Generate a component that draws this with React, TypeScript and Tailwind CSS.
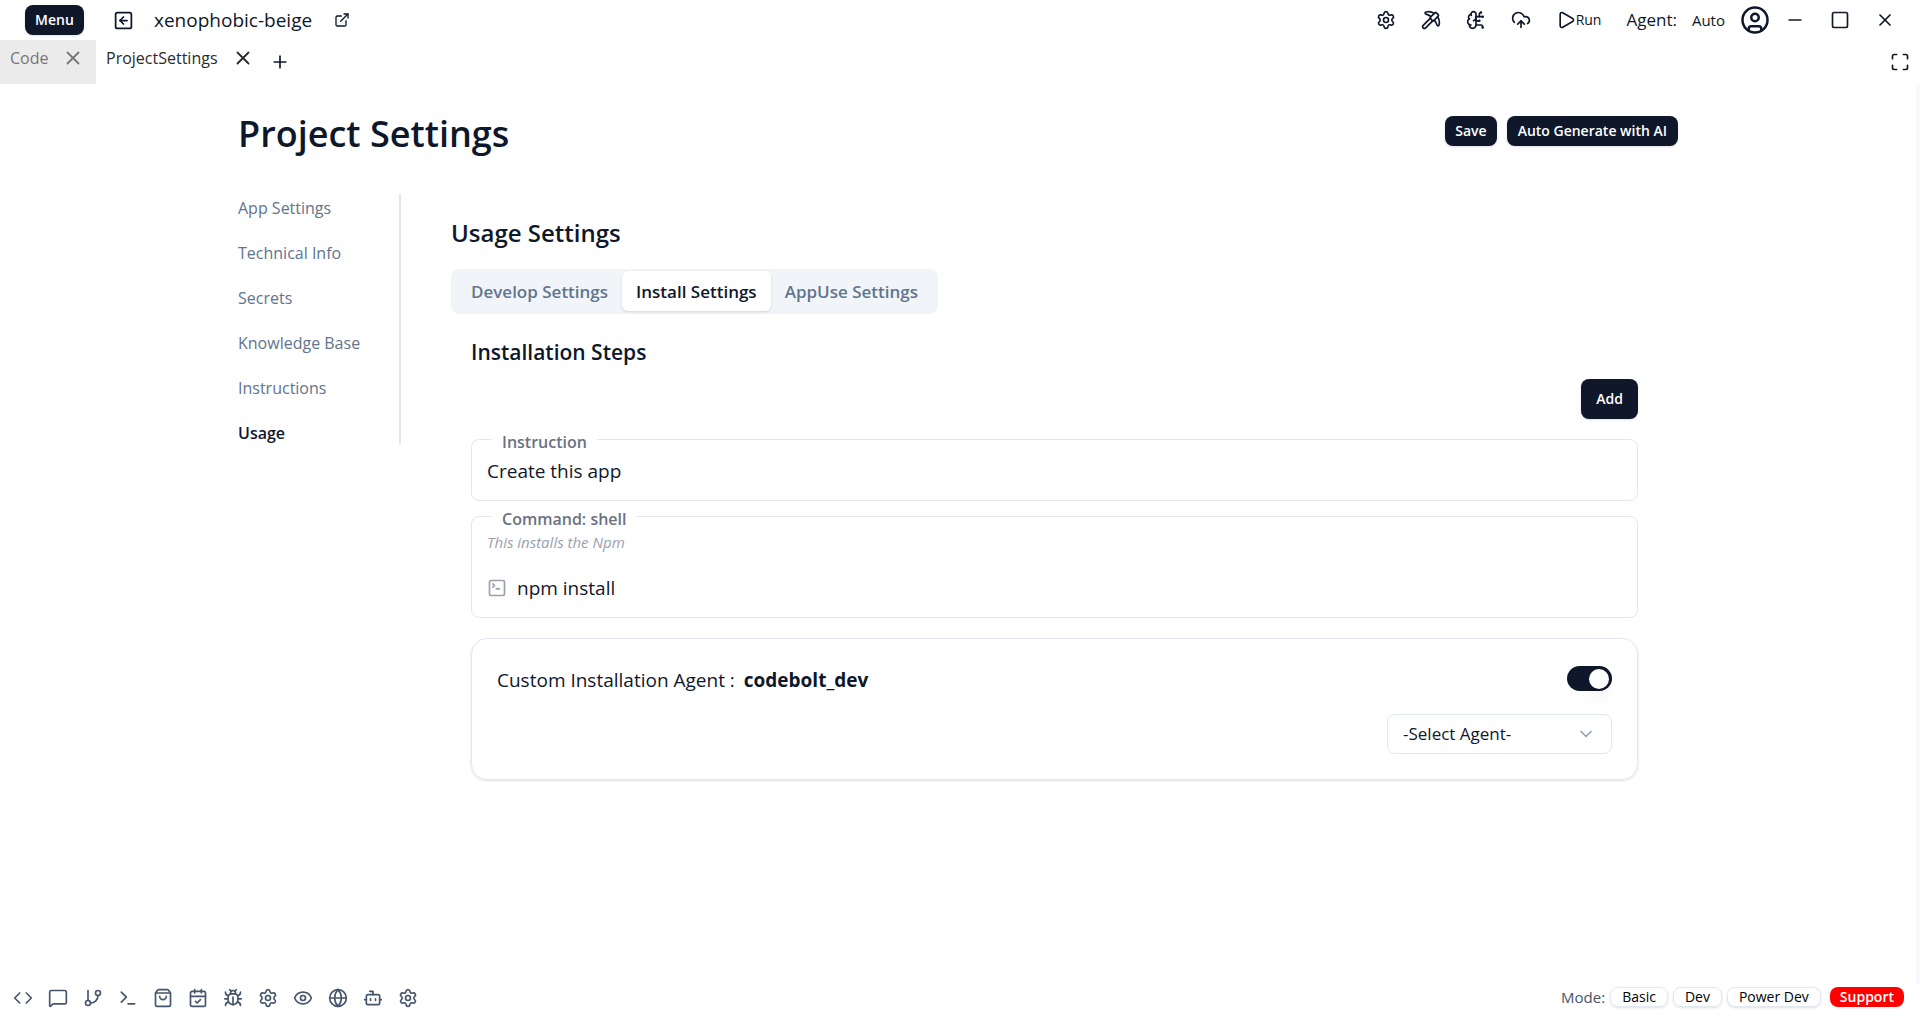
import React from "react";
import {
  Settings, Pickaxe, BrainCircuit, CloudUpload, Play, CircleUser, Minus, Square, X, Maximize, Plus, SquareArrowLeft, ExternalLink,
  Code, MessageSquare, GitBranch, Terminal, Eye, Globe, Bot, Bug, CalendarCheck, ShoppingBag, ChevronDown, SquareTerminal,
} from "lucide-react";

const navItems = ["App Settings", "Technical Info", "Secrets", "Knowledge Base", "Instructions", "Usage"];
const tabs = ["Develop Settings", "Install Settings", "AppUse Settings"];
const tools = [
  { label: "Code", Icon: Code },
  { label: "Chat", Icon: MessageSquare },
  { label: "Git", Icon: GitBranch },
  { label: "Terminal", Icon: Terminal },
  { label: "Store", Icon: ShoppingBag },
  { label: "Tasks", Icon: CalendarCheck },
  { label: "Debug", Icon: Bug },
  { label: "Preferences", Icon: Settings },
  { label: "Preview", Icon: Eye },
  { label: "Browser", Icon: Globe },
  { label: "Bot", Icon: Bot },
  { label: "Settings", Icon: Settings },
];

function Header() {
  return (
    <header className="flex h-10 items-center justify-between pl-[25px] pr-[25px]">
      <div className="flex items-center">
        <button className="h-[30px] w-[59px] rounded-lg bg-slate-900 text-sm font-semibold text-white shadow-sm">Menu</button>
        <button aria-label="Back" className="ml-[29px]"><SquareArrowLeft size={21} /></button>
        <span className="ml-5 text-[19px]">xenophobic-beige</span>
        <a href="#open" aria-label="Open in new window" className="ml-[22px]"><ExternalLink size={16} /></a>
      </div>
      <div className="flex items-center">
        <div className="flex items-center gap-[25px]">
          <button aria-label="Settings"><Settings size={20} /></button>
          <button aria-label="Build"><Pickaxe size={20} /></button>
          <button aria-label="Models"><BrainCircuit size={20} /></button>
          <button aria-label="Deploy"><CloudUpload size={20} /></button>
          <button className="flex items-center text-sm font-medium"><Play size={20} />Run</button>
        </div>
        <span className="ml-[25px] text-[17px]">Agent:</span>
        <button className="ml-[15px] text-[15px] font-medium">Auto</button>
        <button aria-label="Account" className="ml-[15px]"><CircleUser size={30} /></button>
        <div className="ml-[15px] flex items-center gap-[25px]">
          <button aria-label="Minimize"><Minus size={20} /></button>
          <button aria-label="Maximize"><Square size={20} /></button>
          <button aria-label="Close"><X size={20} /></button>
        </div>
      </div>
    </header>
  );
}

function TabBar() {
  return (
    <div className="flex h-11 justify-between text-base">
      <div className="flex">
        <div className="flex w-24 gap-3.5 bg-[#ebebeb] pl-2.5 pt-1.5 text-[#777]">
          <button className="h-6 leading-6">Code</button>
          <button aria-label="Close Code" className="h-6"><X size={22} /></button>
        </div>
        <div className="flex gap-3.5 pl-2.5 pt-1.5 text-[#2b2b2b]">
          <button className="h-6 leading-6">ProjectSettings</button>
          <button aria-label="Close ProjectSettings" className="h-6"><X size={22} /></button>
        </div>
        <button aria-label="New tab" className="ml-4"><Plus size={20} /></button>
      </div>
      <button aria-label="Full screen" className="mr-2.5"><Maximize size={20} /></button>
    </div>
  );
}

function Step({ title, children }: { title: string; children: React.ReactNode }) {
  return (
    <fieldset className="rounded-lg border border-gray-200 px-[15px] pb-[13px]">
      <legend className="ml-[5px] h-6 px-2.5 text-base font-semibold leading-[30px] text-gray-500">{title}</legend>
      {children}
    </fieldset>
  );
}

function AgentCard() {
  return (
    <section className="mt-5 rounded-2xl border border-slate-200 px-[25px] pb-[25px] pt-[27px] shadow">
      <div className="flex items-start justify-between">
        <p className="text-[19px] leading-7">
          Custom Installation Agent : <strong className="ml-1 font-bold">codebolt_dev</strong>
        </p>
        <label className="relative flex h-[25px] w-[45px]">
          <input
            type="checkbox"
            role="switch"
            defaultChecked
            aria-label="Use custom installation agent"
            className="peer absolute inset-0 size-full cursor-pointer opacity-0"
          />
          <span className="pointer-events-none flex size-full items-center rounded-full bg-slate-300 p-[3px] peer-checked:justify-end peer-checked:bg-slate-900">
            <span className="size-5 rounded-full bg-white shadow-lg" />
          </span>
        </label>
      </div>
      <div className="mt-5 flex justify-end">
        <div className="relative w-[225px]">
          <select aria-label="Select agent" className="h-10 w-full appearance-none rounded-lg border border-slate-200 bg-white px-[15px] text-[17px]">
            <option>-Select Agent-</option>
          </select>
          <ChevronDown size={20} className="pointer-events-none absolute right-4 top-2.5 text-slate-400" />
        </div>
      </div>
    </section>
  );
}

function Footer() {
  return (
    <footer className="flex h-[35px] items-center justify-between pb-2.5 pl-[13px] pr-4">
      <div className="flex items-center gap-[15px] text-slate-600">
        {tools.map(({ label, Icon }) => (
          <button key={label} aria-label={label}><Icon size={20} /></button>
        ))}
      </div>
      <div className="flex items-center gap-[5px] text-sm">
        <span className="text-[15px] text-slate-600">Mode:</span>
        {["Basic", "Dev", "Power Dev"].map((m) => (
          <button key={m} className="h-5 rounded-lg border border-slate-200 px-[11px] text-sm font-medium leading-4 text-black shadow-sm">{m}</button>
        ))}
        <button className="ml-1 h-5 rounded-lg bg-[#ff0000] px-2.5 font-semibold leading-5 text-white">Support</button>
      </div>
    </footer>
  );
}

export default function App() {
  return (
    <div className="flex min-h-screen flex-col bg-white font-['Open_Sans','Noto_Sans',sans-serif] text-slate-900">
      <Header />
      <TabBar />
      <main className="flex-1 border-r-4 border-[#f8f8ff]">
        <div className="mx-auto w-full max-w-[1440px]">
          <div className="flex items-start justify-between pt-[26px]">
            <h1 className="text-4xl font-semibold leading-[48px]">Project Settings</h1>
            <div className="mt-1.5 flex gap-2.5">
              <button className="h-[30px] rounded-lg bg-slate-900 px-2.5 text-sm font-semibold text-white shadow-sm">Save</button>
              <button className="h-[30px] rounded-lg bg-slate-900 px-[11px] text-sm font-semibold text-white shadow-sm">Auto Generate with AI</button>
            </div>
          </div>
          <div className="mt-9 flex items-start gap-[50px]">
            <nav className="flex w-[163px] flex-col gap-[21px] border-r-2 border-slate-200 pt-0.5 text-base text-slate-500">
              {navItems.map((n) => (
                <a key={n} href="#section" className={n === "Usage" ? "font-semibold leading-6 text-slate-900" : "leading-6"}>{n}</a>
              ))}
            </nav>
            <div className="min-w-0 flex-1 pr-10 pt-[23px]">
              <h2 className="text-2xl font-semibold leading-8">Usage Settings</h2>
              <div className="mt-5 inline-flex h-[45px] rounded-lg bg-slate-100 px-1.5 pt-0.5">
                {tabs.map((t, i) => (
                  <button key={t} className={i === 1 ? "h-10 rounded-md bg-white px-3.5 pt-0.5 text-[17px] font-semibold shadow-sm" : "h-10 px-3.5 pt-0.5 text-[17px] font-semibold text-slate-500"}>{t}</button>
                ))}
              </div>
              <div className="pl-5">
                <h3 className="mt-5 text-[21px] font-semibold leading-9">Installation Steps</h3>
                <div className="mt-[9px] flex justify-end">
                  <button className="h-10 rounded-lg bg-slate-900 px-[15px] text-sm font-semibold text-white shadow-sm">Add</button>
                </div>
                <div className="mt-2 flex flex-col gap-[3px]">
                  <Step title="Instruction"><p className="mt-1 text-[19px] leading-8">Create this app</p></Step>
                  <Step title="Command: shell">
                    <p className="mt-1 text-[15px] italic leading-5 text-gray-400">This installs the Npm</p>
                    <p className="mt-5 flex items-center gap-2.5 text-[19px] leading-8"><SquareTerminal size={20} className="text-gray-400" />npm install</p>
                  </Step>
                </div>
                <AgentCard />
              </div>
            </div>
          </div>
        </div>
      </main>
      <Footer />
    </div>
  );
}
